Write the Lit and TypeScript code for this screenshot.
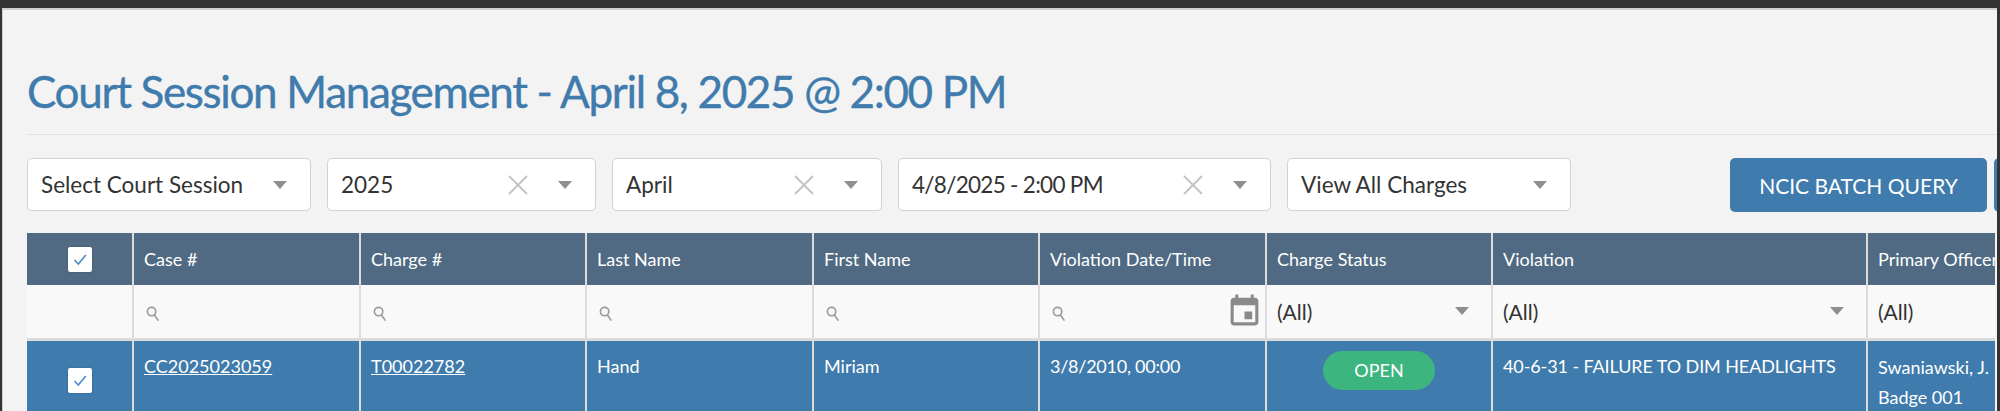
import { LitElement, html, css, svg } from "lit";
import { customElement } from "lit/decorators.js";

interface Column {
  label: string;
  width: number;
}

const COLUMNS: Column[] = [
  { label: "Case #", width: 227 },
  { label: "Charge #", width: 226 },
  { label: "Last Name", width: 227 },
  { label: "First Name", width: 226 },
  { label: "Violation Date/Time", width: 227 },
  { label: "Charge Status", width: 226 },
  { label: "Violation", width: 375 },
  { label: "Primary Officer", width: 226 },
];

const arrow = html`<svg class="arrow" viewBox="0 0 14 8"><path d="M0 0h14L7 8z" /></svg>`;
const clearIcon = html`<svg class="clear" viewBox="0 0 20 20"><path d="M1 1l18 18M19 1L1 19" /></svg>`;
const searchIcon = svg`<svg class="search" viewBox="0 0 14 16"><circle cx="5.6" cy="5.6" r="4.2" /><path d="M8.4 9l4 5.6" /></svg>`;
const checkBox = html`<span class="check"><svg viewBox="0 0 24 24"><path d="M6.5 12.5l3.8 4 7.5-9" /></svg></span>`;

@customElement("app-root")
class AppRoot extends LitElement {
  static styles = css`
    :host {
      display: block;
      width: 2000px;
      height: 411px;
      overflow: hidden;
      box-sizing: border-box;
      background: #333;
      padding: 8px 3px 0 2px;
      font-family: Lato, "Open Sans", sans-serif;
    }
    .page {
      height: 403px;
      box-sizing: border-box;
      overflow: hidden;
      background: #f3f3f3;
      border-top: 2px solid #cfcfcf;
      border-left: 1px solid #cfcfcf;
      padding: 0 0 0 24px;
    }
    h1 {
      margin: 0;
      padding: 55px 0 17px;
      font-size: 44px;
      line-height: 52px;
      font-weight: 400;
      letter-spacing: -1.33px;
      -webkit-text-stroke: 0.4px #3f7bac;
      color: #3f7bac;
      border-bottom: 1px solid #dbe3e8;
      white-space: nowrap;
    }
    .filters {
      display: flex;
      align-items: stretch;
      height: 53px;
      margin-top: 23px;
    }
    .select {
      box-sizing: border-box;
      display: flex;
      align-items: center;
      background: #fff;
      border: 1px solid #d2d2d2;
      border-radius: 5px;
      padding: 0 23px 0 13px;
      font-size: 22.5px;
      color: #333;
      margin-right: 16px;
      flex: none;
    }
    .select .value {
      flex: 1;
      white-space: nowrap;
    }
    .select .tight {
      letter-spacing: -0.7px;
    }
    .arrow {
      width: 14px;
      height: 8px;
      flex: none;
      fill: #8f8f8f;
    }
    .clear {
      width: 20px;
      height: 20px;
      margin-right: 30px;
      flex: none;
      fill: none;
      stroke: #c4c4c4;
      stroke-width: 2;
    }
    .w284 { width: 284px; }
    .w269 { width: 269px; }
    .w270 { width: 270px; }
    .w373 { width: 373px; }
    .spacer {
      width: 143px;
      flex: none;
    }
    button {
      flex: none;
      width: 257px;
      height: 54px;
      border: 0;
      border-radius: 5px;
      background: #3f7bac;
      color: #fff;
      font: 400 21px Lato, sans-serif;
      margin-right: 7px;
      padding: 0;
    }
    .stub {
      width: 40px;
      margin: 0;
    }
    .table-wrap {
      margin-top: 22px;
      overflow: hidden;
      width: 1968px;
    }
    table {
      table-layout: fixed;
      border-collapse: collapse;
      width: 2066px;
      font-size: 18px;
    }
    th, td {
      box-sizing: border-box;
      text-align: left;
      vertical-align: top;
      padding: 0 10px;
      border: 2px solid #dcdcdc;
      border-width: 0 2px;
      white-space: nowrap;
      overflow: hidden;
    }
    th:first-child, td:first-child {
      border-left: 0;
      padding: 0;
    }
    thead th {
      height: 52px;
      background: #4f6a82;
      color: #fff;
      font-weight: 400;
      vertical-align: middle;
    }
    .filter-row td {
      height: 54px;
      background: #f9f9f9;
      border-bottom: 3px solid #dcdcdc;
      vertical-align: middle;
      font-size: 21px;
      color: #333;
    }
    .data-row td {
      height: 82px;
      background: #3f7bac;
      color: #fff;
      padding-top: 10px;
      line-height: 30px;
    }
    .data-row td:first-child {
      padding: 0;
      vertical-align: middle;
    }
    .data-row a {
      color: #fff;
      text-decoration: underline;
    }
    .data-row .date {
      letter-spacing: -0.25px;
    }
    .data-row .violation {
      letter-spacing: -0.1px;
    }
    .data-row .officer {
      padding-top: 11px;
    }
    .check {
      display: block;
      width: 24px;
      height: 25px;
      margin: 0 auto;
      background: #fff;
      border-radius: 2px;
      box-shadow: 0 0 2px rgba(0, 0, 0, 0.25);
    }
    .check svg {
      display: block;
      width: 24px;
      height: 25px;
      fill: none;
      stroke: #4f8ac4;
      stroke-width: 1.6;
    }
    .search {
      display: block;
      width: 14px;
      height: 16px;
      margin: 5px 0 0 2px;
      fill: none;
      stroke: #9a9a9a;
      stroke-width: 1.6;
    }
    .date-filter {
      display: flex;
      align-items: center;
      justify-content: space-between;
    }
    .calendar {
      width: 37px;
      height: 37px;
      margin-right: -8px;
      fill: #8a8a8a;
      flex: none;
    }
    .all-filter {
      display: flex;
      align-items: center;
      justify-content: space-between;
      padding-right: 12px;
    }
    .pill {
      display: block;
      width: 112px;
      height: 39px;
      line-height: 39px;
      margin: 0 auto;
      border-radius: 20px;
      background: #3db57f;
      text-align: center;
      font-size: 18px;
    }
  `;

  private select(value: string, widthClass: string, clearable = false, tight = false) {
    return html`
      <div class="select ${widthClass}">
        <span class="value ${tight ? "tight" : ""}">${value}</span>
        ${clearable ? clearIcon : ""}
        ${arrow}
      </div>
    `;
  }

  render() {
    return html`
      <div class="page">
        <h1>Court Session Management - April 8, 2025 @ 2:00 PM</h1>
        <div class="filters">
          ${this.select("Select Court Session", "w284")}
          ${this.select("2025", "w269", true)}
          ${this.select("April", "w270", true)}
          ${this.select("4/8/2025 - 2:00 PM", "w373", true, true)}
          ${this.select("View All Charges", "w284")}
          <div class="spacer"></div>
          <button>NCIC BATCH QUERY</button>
          <button class="stub"></button>
        </div>
        <div class="table-wrap">
          <table>
            <colgroup>
              <col style="width:106px" />
              ${COLUMNS.map((c) => html`<col style="width:${c.width}px" />`)}
            </colgroup>
            <thead>
              <tr>
                <th>${checkBox}</th>
                ${COLUMNS.map((c) => html`<th>${c.label}</th>`)}
              </tr>
            </thead>
            <tbody>
              <tr class="filter-row">
                <td></td>
                <td>${searchIcon}</td>
                <td>${searchIcon}</td>
                <td>${searchIcon}</td>
                <td>${searchIcon}</td>
                <td>
                  <div class="date-filter">
                    ${searchIcon}
                    <svg class="calendar" viewBox="0 0 24 24">
                      <path d="M17 12h-5v5h5v-5zM16 1v2H8V1H6v2H5c-1.11 0-1.99.9-1.99 2L3 19c0 1.1.89 2 2 2h14c1.1 0 2-.9 2-2V5c0-1.1-.9-2-2-2h-1V1h-2zm3 18H5V8h14v11z" />
                    </svg>
                  </div>
                </td>
                <td><div class="all-filter"><span>(All)</span>${arrow}</div></td>
                <td><div class="all-filter"><span>(All)</span>${arrow}</div></td>
                <td>(All)</td>
              </tr>
              <tr class="data-row">
                <td>${checkBox}</td>
                <td><a href="#">CC2025023059</a></td>
                <td><a href="#">T00022782</a></td>
                <td>Hand</td>
                <td>Miriam</td>
                <td class="date">3/8/2010, 00:00</td>
                <td><span class="pill">OPEN</span></td>
                <td class="violation">40-6-31 - FAILURE TO DIM HEADLIGHTS</td>
                <td class="officer">Swaniawski, J.<br />Badge 001</td>
              </tr>
            </tbody>
          </table>
        </div>
      </div>
    `;
  }
}
